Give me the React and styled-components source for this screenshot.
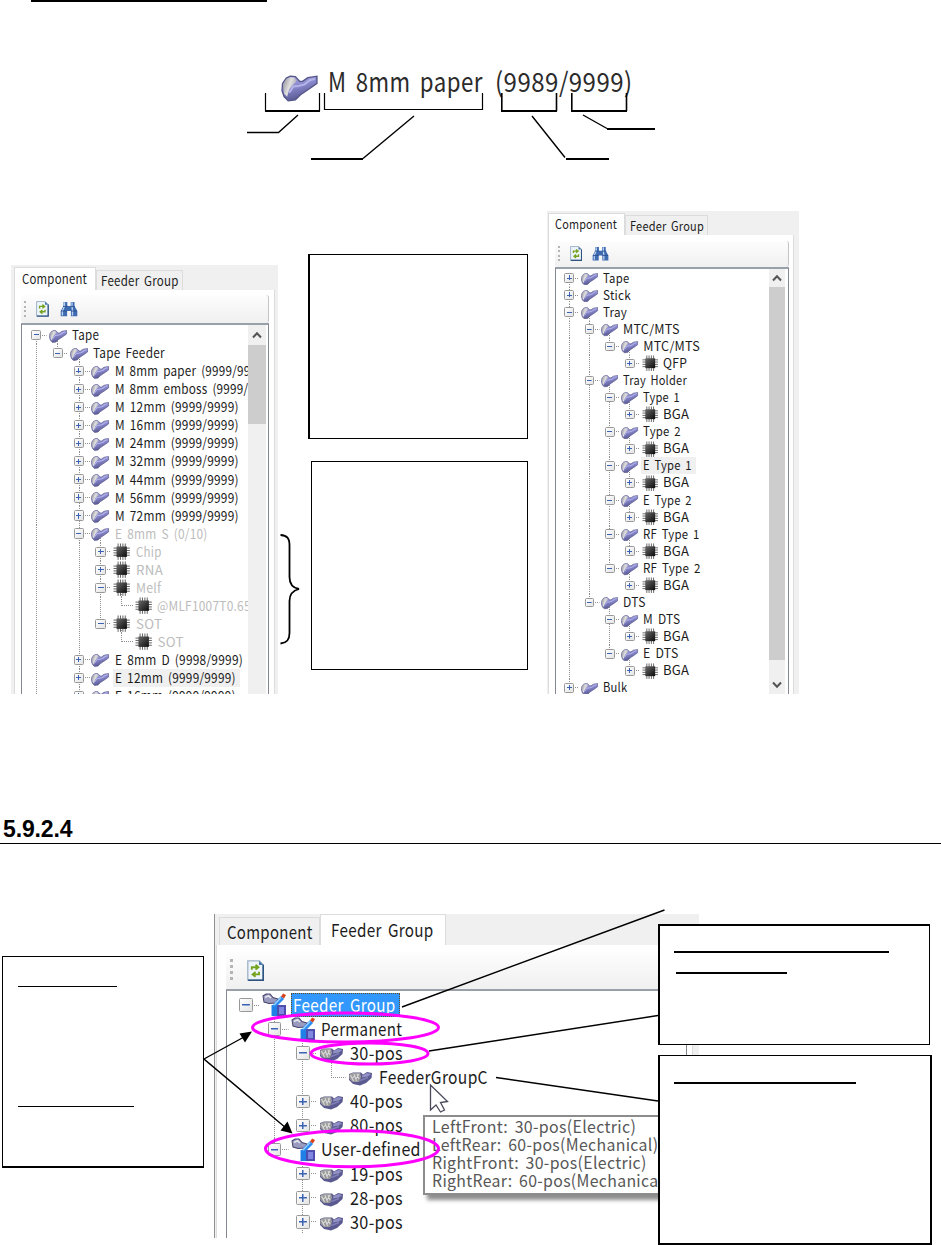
import React, { useLayoutEffect, useRef, useState } from "react";
import styled, { createGlobalStyle, css } from "styled-components";

const Global = createGlobalStyle`
  * { box-sizing: border-box; }
  body { margin: 0; background: #fff; }
`;

const ui = `"Noto Sans CJK JP", "Noto Sans", sans-serif`;

const Sheet = styled.main`
  position: relative;
  width: 941px;
  height: 1245px;
  overflow: hidden;
  background: #fff;
  color: #1c1c1c;
  font-family: ${ui};
`;

/* ---------- text condensed or widened to a known width ---------- */

const FitBox = styled.span`
  display: inline-block;
  width: ${(p) => p.$w}px;
  line-height: 1;
  white-space: pre;
  vertical-align: top;
`;

const FitText = styled.span`
  display: inline-block;
  transform-origin: 0 50%;
  word-spacing: 0.17em;
  letter-spacing: 0.02em;
`;

function Fit({ children, width }) {
  const ref = useRef(null);
  const [scale, setScale] = useState(1);
  useLayoutEffect(() => {
    setScale(width / ref.current.offsetWidth);
  }, [children, width]);
  return (
    <FitBox $w={width}>
      <FitText ref={ref} style={{ transform: `scaleX(${scale})` }}>
        {children}
      </FitText>
    </FitBox>
  );
}

/* ---------- icons ---------- */

const FeederIcon = (p) => (
  <svg viewBox="0 0 36 26" {...p}>
    <defs>
      <linearGradient id="arm" x1="0" y1="0" x2="0.4" y2="1">
        <stop offset="0" stopColor="#b0b0e4" />
        <stop offset="0.5" stopColor="#8888cc" />
        <stop offset="1" stopColor="#56568e" />
      </linearGradient>
      <linearGradient id="disc" x1="0" y1="0" x2="1" y2="0.5">
        <stop offset="0" stopColor="#8c8c8c" />
        <stop offset="0.55" stopColor="#e0e0e0" />
        <stop offset="1" stopColor="#a4a4b0" />
      </linearGradient>
    </defs>
    <path d="M5 3 L9 1 L14 1.500 L18 6 L21 6 L26 2.500 L35 1 L35 8 L28 13 L19 19 L14 24 L7 25 L3 21 L1 15 L1.500 8Z" fill="url(#arm)" stroke="#55558a" strokeWidth="1.300" />
    <path d="M2 9 L5 4 L9 2 L13 2.500 L15 6 L11 10 L8 14 L6 21 L3 18Z" fill="url(#disc)" />
    <path d="M8 17 L12 11 L17 10.500 L23 9 L28 5 L33 3.500" fill="none" stroke="#b4b4ea" strokeWidth="2" />
  </svg>
);

const ChipIcon = (p) => (
  <svg viewBox="0 0 17 17" {...p}>
    <defs>
      <linearGradient id="die" x1="0" y1="0" x2="1" y2="1">
        <stop offset="0" stopColor="#6a6a6a" />
        <stop offset="1" stopColor="#0a0a0a" />
      </linearGradient>
    </defs>
    <path d="M5 0.500V16.500M7.300 0.500V16.500M9.700 0.500V16.500M12 0.500V16.500M0.500 5H16.500M0.500 7.300H16.500M0.500 9.700H16.500M0.500 12H16.500" stroke="#555" strokeWidth="0.900" />
    <rect x="3.400" y="3.400" width="10.200" height="10.200" fill="url(#die)" />
  </svg>
);

const GroupIcon = (p) => (
  <svg viewBox="0 0 24 24" {...p}>
    <path d="M9.500 12h8v11h-8z" fill="#1f7fe6" />
    <path d="M15 12h9v11h-9z" fill="#4d4dae" />
    <path d="M17 14h5v7h-5z" fill="#7f88e0" />
    <path d="M1 3 L4 1 L8 1 L11 4.500 L16 6 L14 10 L7 10.500 L2 9Z" fill="#9a9abe" stroke="#44446c" strokeWidth="1" />
    <path d="M3 4.500 L6.500 2.800 L9 5" stroke="#e4e4ee" strokeWidth="1.600" fill="none" />
    <path d="M10 14 L13 9 L19 3 L22 6 L16 12Z" fill="#2a8cf0" />
    <path d="M12 12 L19 4.500" stroke="#9cd0ff" strokeWidth="1.400" />
    <path d="M19 3.400 L21 0.600 L24 2 L22 5.600Z" fill="#d8431c" />
  </svg>
);

const PosIcon = (p) => (
  <svg viewBox="0 0 24 15" {...p}>
    <path d="M1 3 L5 1.500 L13 1.500 L15 3.500 L19 1 L24 2 L23.500 7 L18 12 L12 14.500 L5 13 L1 9Z" fill="#5a5a90" />
    <path d="M14 4.500 L19 2 L23 3 L20 5.500 L14 6.500Z" fill="#9090c4" />
    <path d="M1 4 L4 2 L12 2 L13 6 L11 11 L5 11 L1.500 8Z" fill="#9b9b9b" />
    <path d="M2.500 4 L5.500 10 M6 3 L8.500 10 M9 3 L11 8 M4 8 L7 4 M8 8 L11 3" stroke="#dadada" strokeWidth="1" />
    <path d="M12 9.500 L20 6.500" stroke="#8080b8" strokeWidth="1.400" />
  </svg>
);

const RefreshIcon = (p) => (
  <svg viewBox="0 0 13 16" {...p}>
    <path d="M0.600 0.600H9.200L12.200 3.600V15H0.600Z" fill="#eef4fb" stroke="#9fb2c8" strokeWidth="1" />
    <path d="M12.200 3.600V15.200H0.800" fill="none" stroke="#2d5480" strokeWidth="1.300" />
    <path d="M9 0.600V3.800H12.200" fill="#4a78aa" />
    <path d="M3.600 7.400V5.400H7.600M6.400 3.600L8.600 5.400L6.400 7.200" fill="none" stroke="#74a41f" strokeWidth="1.400" />
    <path d="M9 8.800V10.800H5.200M6.400 9L4.200 10.800L6.400 12.600" fill="none" stroke="#74a41f" strokeWidth="1.400" />
  </svg>
);

const BinocularsIcon = (p) => (
  <svg viewBox="0 0 18 16" {...p}>
    <path d="M3.500 1h3.800v4h3.400V1h3.800v4l2.800 5v5.200h-6.400V10H7.100v5.200H0.700V10l2.800-5z" fill="#3f6bb0" />
    <path d="M4.500 1.200v4L2.400 10v4.400M12 1.200v4L12.500 10v4.400" stroke="#b9d2f2" strokeWidth="1.300" fill="none" />
    <path d="M3 5.400h4.600M10.400 5.400h4.600M1 10h6M11 10h6" stroke="#2a4f90" strokeWidth="0.900" />
  </svg>
);

const Chevron = ({ down }) => (
  <svg width="10" height="8" viewBox="0 0 10 8">
    <path d={down ? "M1 1.5L5 5.8L9 1.5" : "M1 6.5L5 2.2L9 6.5"} fill="none" stroke="#555" strokeWidth="2" />
  </svg>
);

/* ---------- window panel ---------- */

const Panel = styled.section`
  --u: ${(p) => p.$unit}px;
  flex: none;
  display: flex;
  flex-direction: column;
  width: ${(p) => p.$w}px;
  height: ${(p) => p.$h}px;
  margin: ${(p) => p.$margin};
  padding: 0 ${(p) => p.$right}px 0 ${(p) => p.$left}px;
  background: #f0f0f0;
  overflow: hidden;
  ${(p) => p.$edge && css`border-left: 1px solid #8f8f8f;`}
`;

const Tabs = styled.div`
  flex: none;
  display: flex;
  align-items: flex-end;
  height: ${(p) => p.$h}px;
  padding-left: ${(p) => p.$inset || 0}px;
`;

const Tab = styled.div`
  width: ${(p) => p.$w}px;
  height: ${(p) => p.$h}px;
  padding: ${(p) => p.$top}px 0 0 ${(p) => p.$pad}px;
  border: 1px solid #dcdcdc;
  border-bottom: 0;
  background: ${(p) => (p.$active ? "#fff" : "#f0f0f0")};
  font-size: calc(var(--u) * 11.8);
  line-height: 1;
  white-space: nowrap;
`;

const Page = styled.div`
  flex: 1;
  min-height: 0;
  display: flex;
  flex-direction: column;
  padding: ${(p) => p.$pad};
  background: #fff;
  border: 1px solid #dcdcdc;
  border-width: 0 1px;
`;

const Toolbar = styled.div`
  flex: none;
  display: flex;
  align-items: center;
  gap: calc(var(--u) * 9.3);
  height: ${(p) => p.$h}px;
  padding-left: calc(var(--u) * 2.4);
  border-right: 1px solid #c4c4c4;
  border-radius: 3px;
  background: linear-gradient(#fdfdfd, #f0f0f0);
  svg { height: calc(var(--u) * 14.2); }
`;

const Grip = styled.i`
  width: calc(var(--u) * 2);
  height: calc(var(--u) * 15);
  background: repeating-linear-gradient(#b4b4b4 0 calc(var(--u) * 2), transparent calc(var(--u) * 2) calc(var(--u) * 4));
`;

const TreeBox = styled.div`
  flex: 1;
  min-height: 0;
  display: flex;
  border: 1px solid #828790;
  border-width: 2px 1px 0 1px;
  border-top-color: #9aa0a8;
  padding-right: ${(p) => p.$gap || 0}px;
`;

const Rows = styled.div`
  flex: 1;
  min-width: 0;
  overflow: hidden;
  padding: ${(p) => p.$pad};
`;

const Row = styled.div`
  display: flex;
  align-items: center;
  height: ${(p) => p.$h}px;
`;

const dotsDown = "repeating-linear-gradient(to bottom, #8f8f8f 0 1px, transparent 1px 2px)";
const dotsAcross = "repeating-linear-gradient(to right, #8f8f8f 0 1px, transparent 1px 2px)";

const Guide = styled.i`
  flex: none;
  align-self: stretch;
  width: calc(var(--u) * ${(p) => p.$indent});
  background: ${dotsDown} 50% 0 / 1px ${(p) => (p.$on ? "100%" : "0")} no-repeat;
`;

const Knob = styled.span`
  flex: none;
  align-self: stretch;
  display: grid;
  place-items: center;
  width: calc(var(--u) * ${(p) => p.$indent});
  background:
    ${dotsDown} 50% 0 / 1px ${(p) => (p.$up ? "50%" : "0")} no-repeat,
    ${dotsDown} 50% 100% / 1px ${(p) => (p.$down ? "50%" : "0")} no-repeat,
    ${dotsAcross} 100% 50% / 50% 1px no-repeat;
`;

const Box = styled.b`
  width: calc(var(--u) * 9);
  height: calc(var(--u) * 9);
  border: calc(var(--u) * 0.9) solid #989898;
  border-radius: 1.5px;
  background:
    linear-gradient(#3c62b4 0 0) center / 66% calc(var(--u) * 1) no-repeat,
    linear-gradient(#3c62b4 0 0) center / calc(var(--u) * 1) ${(p) => (p.$plus ? "66%" : "0")} no-repeat,
    linear-gradient(135deg, #fff, #e4e4e4);
`;

const IconSlot = styled.span`
  flex: none;
  align-self: stretch;
  display: grid;
  place-items: center;
  width: calc(var(--u) * ${(p) => p.$w});
  background: ${dotsDown} 50% 100% / 1px ${(p) => (p.$open ? "50%" : "0")} no-repeat;
  svg { display: block; width: calc(var(--u) * ${(p) => p.$size}); }
  svg.low { margin-top: calc(var(--u) * 2); }
`;

const Label = styled.span`
  margin-left: calc(var(--u) * ${(p) => p.$gap});
  padding: calc(var(--u) * 1.8) ${(p) => (p.$mark ? 4 : 0)}px calc(var(--u) * 2.2) 2px;
  font-size: calc(var(--u) * 11.8);
  line-height: 1;
  white-space: nowrap;
  color: ${(p) => (p.$mark === "select" ? "#fff" : p.$dim ? "#bcbcbc" : "#1c1c1c")};
  background: ${(p) => (p.$mark === "select" ? "#3398fd" : p.$mark ? "#f0f0f0" : "transparent")};
  ${(p) => p.$mark === "select" && css`outline: 1px dotted #6b4a20; outline-offset: -1px;`}
`;

const ScrollBar = styled.div`
  flex: none;
  display: flex;
  flex-direction: column;
  width: ${(p) => p.$w}px;
  overflow: hidden;
  background: #f0f0f0;
`;

const ScrollButton = styled.div`
  flex: none;
  display: grid;
  place-items: center;
  height: ${(p) => p.$h}px;
`;

const Thumb = styled.div`
  flex: none;
  height: ${(p) => p.$h}px;
  background: #cdcdcd;
`;

const icons = {
  feeder: [FeederIcon, 16, "low"],
  chip: [ChipIcon, 15.4, ""],
  group: [GroupIcon, 16, ""],
  pos: [PosIcon, 16, "low"],
};

const follows = (rows, i, level, open) => {
  for (let j = i + 1; j < rows.length; j++) {
    if (rows[j][0] < level) return false;
    if (rows[j][0] === level) return true;
  }
  return open.includes(level);
};

function Tree({ rows, pitch, indent, open, gap, pad }) {
  return (
    <Rows $pad={pad}>
      {rows.map(([depth, kind, text, width, knob, tone], i) => {
        const [Icon, size, cls] = icons[kind];
        const next = rows[i + 1];
        return (
          <Row key={i} $h={pitch}>
            {Array.from({ length: depth }, (_, k) => (
              <Guide key={k} $indent={indent} $on={follows(rows, i, k, open)} />
            ))}
            <Knob $indent={indent} $up={i > 0} $down={follows(rows, i, depth, open)}>
              {knob && <Box $plus={knob === "+"} />}
            </Knob>
            <IconSlot $w={indent} $size={size} $open={next && next[0] > depth}>
              <Icon className={cls} />
            </IconSlot>
            <Label $gap={gap} $dim={tone === "dim"} $mark={tone !== "dim" && tone}>
              <Fit width={width}>{text}</Fit>
            </Label>
          </Row>
        );
      })}
    </Rows>
  );
}

/* ---------- callouts ---------- */

const Column = styled.div`
  flex: none;
  display: flex;
  flex-direction: column;
  gap: ${(p) => p.$gap}px;
  margin: ${(p) => p.$margin};
`;

const Callout = styled.div`
  position: relative;
  z-index: 2;
  flex: none;
  width: ${(p) => p.$w}px;
  height: ${(p) => p.$h}px;
  margin: ${(p) => p.$margin || 0};
  padding: ${(p) => p.$pad || 0};
  border: solid #000;
  border-width: ${(p) => p.$border || "1px"};
  background: #fff;
`;

const Rule = styled.div`
  width: ${(p) => p.$w}px;
  height: ${(p) => p.$t || 1}px;
  margin: ${(p) => p.$margin || 0};
  background: #000;
`;

/* ---------- page sections ---------- */

const Intro = styled.header`
  height: 211px;
`;

const Caption = styled.div`
  display: flex;
  height: 40px;
  margin: 63px 0 0 281px;
  font-size: 27px;
  color: #2b2b2b;
  svg { width: 37px; height: 27px; margin-top: 10px; }
`;

const Word = styled.span`
  padding-top: 2px;
  margin-left: ${(p) => p.$gap}px;
`;

const Figures = styled.div`
  display: flex;
  align-items: flex-start;
  height: 483px;
  padding-left: 11px;
`;

const Heading = styled.h2`
  margin: 122px 0 0;
  height: 28px;
  padding: 2px 0 0 3px;
  border-bottom: 1px solid #000;
  font: bold 23px/23px "Liberation Sans", sans-serif;
  letter-spacing: -0.15px;
  color: #000;
`;

const Lower = styled.div`
  display: flex;
  align-items: flex-start;
  height: 401px;
  padding-left: 2px;
`;

const Tip = styled.div`
  position: absolute;
  left: 423px;
  top: 1115px;
  width: 262px;
  height: 80px;
  padding: 1px 0 0 7px;
  border: 2px solid #8c8c8c;
  background: #fff;
  box-shadow: 4px 5px 4px rgba(0, 0, 0, 0.45);
  font-size: 16.8px;
  color: #575757;
`;

const TipLine = styled.div`
  height: 18.1px;
  white-space: nowrap;
`;

const Overlay = styled.svg`
  position: absolute;
  z-index: 3;
  inset: 0;
  pointer-events: none;
`;

const leftRows = [
  [0, "feeder", "Tape", 27, "-"],
  [1, "feeder", "Tape Feeder", 72, "-"],
  [2, "feeder", "M 8mm paper (9999/9999)", 153, "+"],
  [2, "feeder", "M 8mm emboss (9999/9999)", 165, "+"],
  [2, "feeder", "M 12mm (9999/9999)", 124, "+"],
  [2, "feeder", "M 16mm (9999/9999)", 124, "+"],
  [2, "feeder", "M 24mm (9999/9999)", 124, "+"],
  [2, "feeder", "M 32mm (9999/9999)", 124, "+"],
  [2, "feeder", "M 44mm (9999/9999)", 124, "+"],
  [2, "feeder", "M 56mm (9999/9999)", 124, "+"],
  [2, "feeder", "M 72mm (9999/9999)", 124, "+"],
  [2, "feeder", "E 8mm S (0/10)", 93, "-", "dim"],
  [3, "chip", "Chip", 26, "+", "dim"],
  [3, "chip", "RNA", 27, "+", "dim"],
  [3, "chip", "Melf", 25, "-", "dim"],
  [4, "chip", "@MLF1007T0.65", 94, "", "dim"],
  [3, "chip", "SOT", 26, "-", "dim"],
  [4, "chip", "SOT", 26, "", "dim"],
  [2, "feeder", "E 8mm D (9998/9999)", 128, "+"],
  [2, "feeder", "E 12mm (9999/9999)", 121, "+", "hover"],
  [2, "feeder", "E 16mm (9999/9999)", 121, "+"],
];

const rightRows = [
  [0, "feeder", "Tape", 26, "+"],
  [0, "feeder", "Stick", 28, "+"],
  [0, "feeder", "Tray", 24, "-"],
  [1, "feeder", "MTC/MTS", 57, "-"],
  [2, "feeder", "MTC/MTS", 57, "-"],
  [3, "chip", "QFP", 24, "+"],
  [1, "feeder", "Tray Holder", 64, "-"],
  [2, "feeder", "Type 1", 37, "-"],
  [3, "chip", "BGA", 26, "+"],
  [2, "feeder", "Type 2", 38, "-"],
  [3, "chip", "BGA", 26, "+"],
  [2, "feeder", "E Type 1", 49, "-", "hover"],
  [3, "chip", "BGA", 26, "+"],
  [2, "feeder", "E Type 2", 49, "-"],
  [3, "chip", "BGA", 26, "+"],
  [2, "feeder", "RF Type 1", 57, "-"],
  [3, "chip", "BGA", 26, "+"],
  [2, "feeder", "RF Type 2", 58, "-"],
  [3, "chip", "BGA", 26, "+"],
  [1, "feeder", "DTS", 23, "-"],
  [2, "feeder", "M DTS", 37, "-"],
  [3, "chip", "BGA", 26, "+"],
  [2, "feeder", "E DTS", 35, "-"],
  [3, "chip", "BGA", 26, "+"],
  [0, "feeder", "Bulk", 24, "+"],
];

const groupRows = [
  [0, "group", "Feeder Group", 103, "-", "select"],
  [1, "group", "Permanent", 81, "-"],
  [2, "pos", "30-pos", 53, "-"],
  [3, "pos", "FeederGroupC", 109, ""],
  [2, "pos", "40-pos", 53, "+"],
  [2, "pos", "80-pos", 53, "+"],
  [1, "group", "User-defined", 100, "-"],
  [2, "pos", "19-pos", 53, "+"],
  [2, "pos", "28-pos", 53, "+"],
  [2, "pos", "30-pos", 53, "+"],
];

const tips = [
  ["LeftFront: 30-pos(Electric)", 204],
  ["LeftRear: 60-pos(Mechanical)", 226],
  ["RightFront: 30-pos(Electric)", 215],
  ["RightRear: 60-pos(Mechanical)", 237],
];

export default function App() {
  return (
    <Sheet>
      <Global />
      <Intro>
        <Rule $w={236} $t={2} $margin="0 0 0 31px" />
        <Caption>
          <FeederIcon />
          <Word $gap={10}><Fit width={155}>M 8mm paper</Fit></Word>
          <Word $gap={12}><Fit width={138}>(9989/9999)</Fit></Word>
        </Caption>
      </Intro>

      <Figures>
        <Panel $unit={1.128} $w={267} $h={429} $margin="54px 0 0" $left={3} $right={3}>
          <Tabs $h={25}>
            <Tab $active $w={82} $h={23} $pad={7} $top={4}><Fit width={65}>Component</Fit></Tab>
            <Tab $w={87} $h={20} $pad={4} $top={3}><Fit width={78}>Feeder Group</Fit></Tab>
          </Tabs>
          <Page $pad="5px 5px 0 6px">
            <Toolbar $h={28}><Grip /><RefreshIcon /><BinocularsIcon /></Toolbar>
            <TreeBox $gap={2}>
              <Tree rows={leftRows} pitch={18.05} indent={19} open={[0, 2]} gap={1.3} pad="1px 0 0 3.5px" />
              <ScrollBar $w={18}>
                <ScrollButton $h={20}><Chevron /></ScrollButton>
                <Thumb $h={79} />
              </ScrollBar>
            </TreeBox>
          </Page>
        </Panel>

        <Column $gap={22} $margin="43px 0 0 30px">
          <Callout $w={220} $h={185} $border="1px 1px 1px 2px" />
          <Callout $w={217} $h={209} $margin="0 0 0 3px" />
        </Column>

        <Panel $unit={1.068} $w={252} $h={483} $margin="0 0 0 19px" $left={1} $right={5}>
          <Tabs $h={24}>
            <Tab $active $w={77} $h={22} $pad={6} $top={4}><Fit width={62}>Component</Fit></Tab>
            <Tab $w={83} $h={20} $pad={4} $top={4}><Fit width={74}>Feeder Group</Fit></Tab>
          </Tabs>
          <Page $pad="6px 4px 0 6px">
            <Toolbar $h={26}><Grip /><RefreshIcon /><BinocularsIcon /></Toolbar>
            <TreeBox $gap={3}>
              <Tree rows={rightRows} pitch={17.09} indent={19} open={[0]} gap={1} pad="0.5px 0 0 3px" />
              <ScrollBar $w={16}>
                <ScrollButton $h={18}><Chevron /></ScrollButton>
                <Thumb $h={373} />
                <ScrollButton $h={50}><Chevron down /></ScrollButton>
              </ScrollBar>
            </TreeBox>
          </Page>
        </Panel>
      </Figures>

      <Heading>5.9.2.4</Heading>

      <Lower>
        <Callout $w={202} $h={212} $margin="112px 0 0" $pad="29px 0 0 15px" $border="1px 1px 2px 1px">
          <Rule $w={99} />
          <Rule $w={116} $margin="119px 0 0" />
        </Callout>

        <Panel $unit={1.504} $w={485} $h={324} $margin="70px 0 0 10px" $left={1} $right={6} $edge>
          <Tabs $h={31} $inset={3}>
            <Tab $w={101} $h={28} $pad={7} $top={5}><Fit width={86}>Component</Fit></Tab>
            <Tab $active $w={126} $h={31} $pad={10} $top={6}><Fit width={103}>Feeder Group</Fit></Tab>
          </Tabs>
          <Page $pad="7px 5px 0 9px">
            <Toolbar $h={37}><Grip /><RefreshIcon /></Toolbar>
            <TreeBox>
              <Tree rows={groupRows} pitch={24.1} indent={19} open={[2]} gap={1.5} pad="2px 0 0 4.5px" />
            </TreeBox>
          </Page>
        </Panel>

        <Column $gap={10} $margin="80px 0 0 -41px">
          <Callout $w={272} $h={121} $pad="25px 0 0 14px" $border="2px 1px 1px 2px">
            <Rule $w={215} $t={2} />
            <Rule $w={111} $t={2} $margin="19px 0 0 2px" />
          </Callout>
          <Callout $w={274} $h={190} $pad="26px 0 0 14px" $border="1px 2px 2px 2px">
            <Rule $w={182} $t={2} />
          </Callout>
        </Column>
      </Lower>

      <Tip>
        {tips.map(([t, w]) => (
          <TipLine key={t}><Fit width={w}>{t}</Fit></TipLine>
        ))}
      </Tip>

      <Overlay width="941" height="1245" viewBox="0 0 941 1245">
        <g fill="none" stroke="#000" strokeWidth="1.2">
          <path d="M265.5 93V111M319.5 93V111M324.5 93V109.5H482.5V93" />
          <path d="M501.8 93V111M556.5 93V111M571.8 93V111M626.5 93V111" strokeWidth="1.6" />
          <path d="M265 111H320M501 111H557M571 111H627" strokeWidth="2" />
          <path d="M298 115L278.500 132.500H247M414 116L363 158.500M532 116L565 157.500M583 115L607 128.500" strokeWidth="1.4" />
          <path d="M311 159H363M566 159H609M607 129H655" strokeWidth="2" />
          <path d="M280.500 535C287 535.500 289.500 538 289.500 545V577C289.500 585 293 588 299 589C293 590.500 289.500 594 289.500 601V633C289.500 640 287 643 280.500 643.500" strokeWidth="1.8" />
          <path d="M402 1007L664.500 910M429 1051L658 1015.500M496 1077.500L658 1101" strokeWidth="1.4" />
          <path d="M244 1037L204 1059L286 1128" strokeWidth="1.4" />
        </g>
        <path d="M252 1031.500L245 1042.500L239.500 1033.500Z M292.500 1133.500L280.500 1130.500L287.500 1121.500Z" />
        <g fill="none" stroke="#f0f" strokeWidth="3">
          <ellipse cx="345.500" cy="1027.500" rx="93" ry="14.500" />
          <ellipse cx="369.500" cy="1053.500" rx="58.500" ry="10.500" />
          <ellipse cx="352" cy="1148.800" rx="86.500" ry="18" />
        </g>
        <path d="M430.500 1085L430.500 1110L436 1105L440.500 1112L444.500 1110L440.500 1102.500L447.500 1101.500Z" fill="#fff" stroke="#4a4a5c" strokeWidth="1.3" />
      </Overlay>
    </Sheet>
  );
}
